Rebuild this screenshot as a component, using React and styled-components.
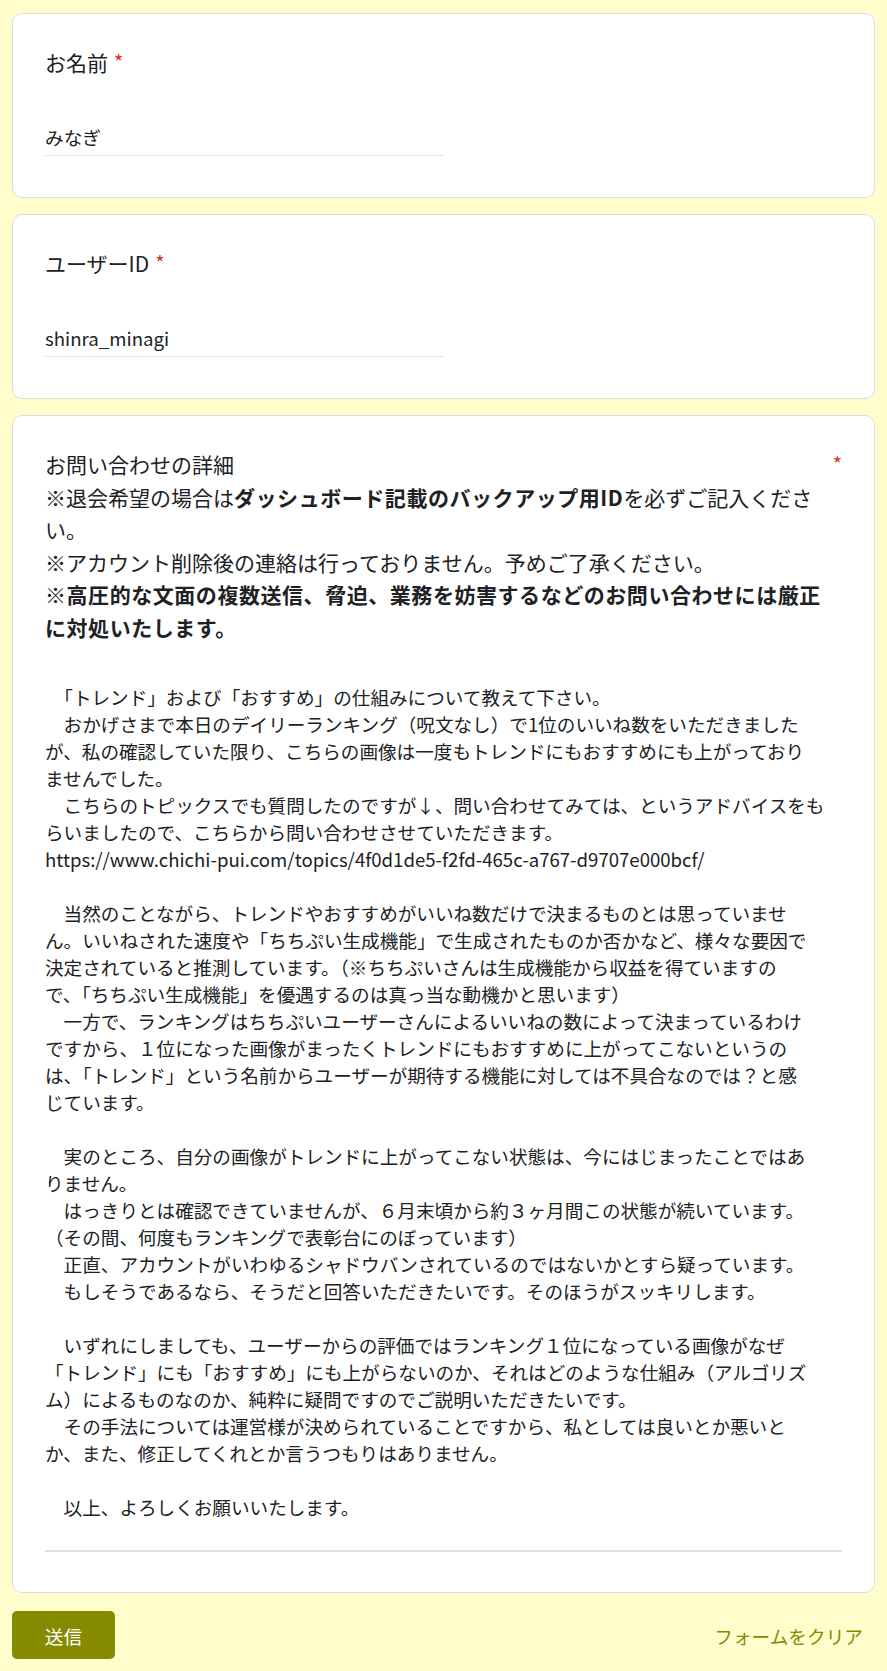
import React from "react";
import styled, { createGlobalStyle } from "styled-components";

const GlobalStyle = createGlobalStyle`
  body {
    margin: 0;
    background: #fffdcc;
    font-family: "Noto Sans CJK JP", "Noto Sans", sans-serif;
    color: #202124;
  }
`;

const detailLines = [
  "　「トレンド」および「おすすめ」の仕組みについて教えて下さい。",
  "　おかげさまで本日のデイリーランキング（呪文なし）で1位のいいね数をいただきました",
  "が、私の確認していた限り、こちらの画像は一度もトレンドにもおすすめにも上がっており",
  "ませんでした。",
  "　こちらのトピックスでも質問したのですが↓、問い合わせてみては、というアドバイスをも",
  "らいましたので、こちらから問い合わせさせていただきます。",
  "https://www.chichi-pui.com/topics/4f0d1de5-f2fd-465c-a767-d9707e000bcf/",
  "",
  "　当然のことながら、トレンドやおすすめがいいね数だけで決まるものとは思っていませ",
  "ん。いいねされた速度や「ちちぷい生成機能」で生成されたものか否かなど、様々な要因で",
  "決定されていると推測しています。（※ちちぷいさんは生成機能から収益を得ていますの",
  "で、「ちちぷい生成機能」を優遇するのは真っ当な動機かと思います）",
  "　一方で、ランキングはちちぷいユーザーさんによるいいねの数によって決まっているわけ",
  "ですから、１位になった画像がまったくトレンドにもおすすめに上がってこないというの",
  "は、「トレンド」という名前からユーザーが期待する機能に対しては不具合なのでは？と感",
  "じています。",
  "",
  "　実のところ、自分の画像がトレンドに上がってこない状態は、今にはじまったことではあ",
  "りません。",
  "　はっきりとは確認できていませんが、６月末頃から約３ヶ月間この状態が続いています。",
  "（その間、何度もランキングで表彰台にのぼっています）",
  "　正直、アカウントがいわゆるシャドウバンされているのではないかとすら疑っています。",
  "　もしそうであるなら、そうだと回答いただきたいです。そのほうがスッキリします。",
  "",
  "　いずれにしましても、ユーザーからの評価ではランキング１位になっている画像がなぜ",
  "「トレンド」にも「おすすめ」にも上がらないのか、それはどのような仕組み（アルゴリズ",
  "ム）によるものなのか、純粋に疑問ですのでご説明いただきたいです。",
  "　その手法については運営様が決められていることですから、私としては良いとか悪いと",
  "か、また、修正してくれとか言うつもりはありません。",
  "",
  "　以上、よろしくお願いいたします。",
];

const App = () => {
  return (
    <>
      <GlobalStyle />
      <Page>
        <Card>
          <QuestionTitle>
            <TitleText>お名前</TitleText>
            <Required>*</Required>
          </QuestionTitle>
          <ShortAnswer>みなぎ</ShortAnswer>
        </Card>

        <Card>
          <QuestionTitle>
            <TitleText>ユーザーID</TitleText>
            <Required>*</Required>
          </QuestionTitle>
          <ShortAnswer>shinra_minagi</ShortAnswer>
        </Card>

        <Card>
          <QuestionTitle $long>
            <TitleText $grow>
              お問い合わせの詳細
              <br />
              ※退会希望の場合は<b>ダッシュボード記載のバックアップ用ID</b>を必ずご記入くださ
              <br />
              い。
              <br />
              ※アカウント削除後の連絡は行っておりません。予めご了承ください。
              <br />
              <b>※高圧的な文面の複数送信、脅迫、業務を妨害するなどのお問い合わせには厳正</b>
              <br />
              <b>に対処いたします。</b>
            </TitleText>
            <Required>*</Required>
          </QuestionTitle>
          <LongAnswer>{detailLines.join("\n")}</LongAnswer>
        </Card>

        <Footer>
          <SubmitButton type="button">送信</SubmitButton>
          <ClearLink>フォームをクリア</ClearLink>
        </Footer>
      </Page>
    </>
  );
};

const Page = styled.main`
  display: flex;
  flex-direction: column;
  gap: 16px;
  padding: 13px 12px 13px 12px;
`;

const Card = styled.section`
  background: #ffffff;
  border: 1px solid #dadce0;
  border-radius: 10px;
  padding: 32px;
`;

const QuestionTitle = styled.div`
  display: flex;
  align-items: flex-start;
  font-size: 21px;
  line-height: ${({ $long }) => ($long ? "32.5px" : "32px")};
  color: #202124;

  b {
    font-weight: 700;
    letter-spacing: 0.55px;
  }
`;

const TitleText = styled.span`
  flex: ${({ $grow }) => ($grow ? "1 1 auto" : "0 0 auto")};
  min-width: 0;
`;

const Required = styled.span`
  color: #d93025;
  padding-left: 6px;
  font-size: 20px;
`;

const ShortAnswer = styled.div`
  box-sizing: border-box;
  display: flex;
  align-items: center;
  width: 50%;
  height: 39px;
  margin-top: 39px;
  margin-bottom: 9px;
  border-bottom: 1px solid #e0e0e0;
  font-size: 18.67px;
  color: #202124;
`;

const LongAnswer = styled.div`
  margin-top: 40px;
  margin-bottom: 8px;
  padding-bottom: 30px;
  border-bottom: 2px solid #e0e0e0;
  font-size: 18.6px;
  line-height: 27px;
  white-space: pre-wrap;
  color: #202124;
`;

const Footer = styled.div`
  display: flex;
  justify-content: space-between;
  align-items: center;
  margin-top: 2px;
`;

const SubmitButton = styled.button`
  width: 103px;
  height: 48px;
  border: none;
  border-radius: 5px;
  background: #868a00;
  color: #ffffff;
  font-family: "Noto Sans CJK JP", "Noto Sans", sans-serif;
  font-size: 18.67px;
  cursor: pointer;
`;

const ClearLink = styled.span`
  margin-right: 12px;
  font-size: 18.67px;
  color: #868a00;
  cursor: pointer;
`;

export default App;
